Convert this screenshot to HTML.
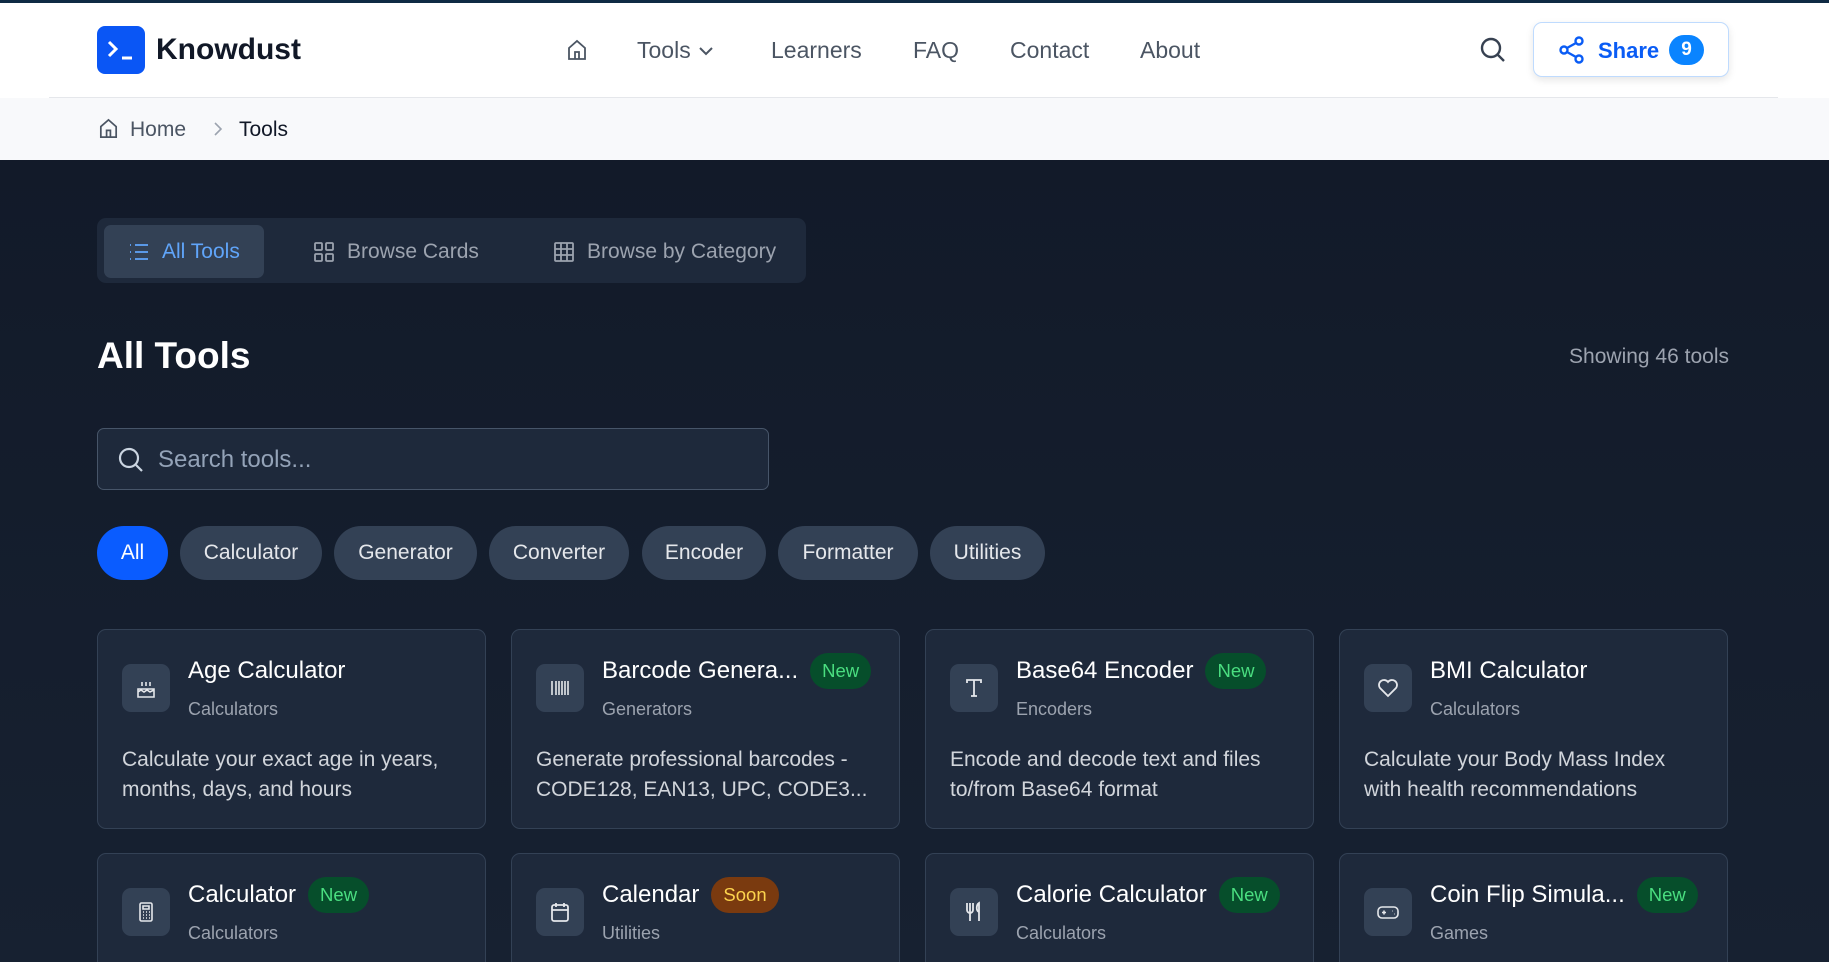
<!DOCTYPE html>
<html><head><meta charset="utf-8"><style>
*{box-sizing:border-box;margin:0;padding:0}
html,body{width:1829px;height:962px;overflow:hidden}
body{font-family:"Liberation Sans",sans-serif;background:#141d2c;position:relative}
.hdr{position:absolute;left:0;top:0;width:1829px;height:98px;background:#fff;border-top:3px solid #0f2a44}
.hline{position:absolute;left:49px;top:97px;width:1729px;height:1px;background:#e5e7eb}
.logo{position:absolute;left:97px;top:26px;width:48px;height:48px;background:#0a56f5;border-radius:8px}
.brand{position:absolute;left:156px;top:33px;font-size:30px;font-weight:bold;color:#111827}
.nav{position:absolute;top:37px;font-size:23px;color:#4b5563}
.bc{position:absolute;left:0;top:98px;width:1829px;height:62px;background:#f8f9fb}
.main{position:absolute;left:0;top:160px;width:1829px;height:802px;background:linear-gradient(180deg,#121a29,#172131)}
.tabs{position:absolute;left:97px;top:218px;width:709px;height:65px;background:#1e293b;border-radius:9px}
.tab{position:absolute;top:7px;height:53px;border-radius:7px;font-size:21px;color:#9ca3af;display:flex;align-items:center;gap:12px;padding-left:24px;white-space:nowrap}
.h1{position:absolute;left:97px;top:335px;font-size:37px;font-weight:bold;color:#fff}
.show{position:absolute;right:100px;top:345px;font-size:21px;color:#9ca3af}
.search{position:absolute;left:97px;top:428px;width:672px;height:62px;border:1px solid #475569;border-radius:7px;background:#1e293b}
.search span{position:absolute;left:60px;top:17px;font-size:24px;color:#94a3b8}
.chip{position:absolute;top:526px;height:54px;border-radius:27px;background:#334155;color:#e5e7eb;font-size:21px;display:flex;align-items:center;justify-content:center}
.card{position:absolute;width:389px;height:200px;background:#1e293b;border:1px solid #334155;border-radius:9px;overflow:hidden}
.ib{position:absolute;left:24px;top:34px;width:48px;height:48px;background:#334155;border-radius:9px;display:flex;align-items:center;justify-content:center}
.tt{position:absolute;left:90px;top:26px;height:30px;font-size:24px;color:#fff;display:flex;align-items:center;gap:12px;white-space:nowrap}
.cat{position:absolute;left:90px;top:69px;font-size:18px;color:#9ca3af}
.ds{position:absolute;left:24px;top:115px;width:335px;font-size:21px;line-height:30px;color:#d1d5db}
.bn{font-size:18.5px;line-height:20px;padding:8px 12px;border-radius:18px;background:#064e2b;color:#4ade80}
.bs{background:#7a3a0f;color:#fcd34d}
</style></head><body>
<div class="hdr"></div><div class="hline"></div>
<div class="logo"><svg width="48" height="48" viewBox="0 0 48 48" fill="none" stroke="#fff" stroke-width="3"><path d="M12 16l7 7-7 7M25 32h10"/></svg></div>
<div class="brand">Knowdust</div>
<svg style="position:absolute;left:565px;top:38px" width="24" height="24" viewBox="0 0 24 24" fill="none" stroke="#4b5563" stroke-width="1.8"><path d="M4 10l8-7 8 7v11H4zM10 21v-7h4v7"/></svg>
<div class="nav" style="left:637px">Tools <svg width="18" height="14" viewBox="0 0 18 14" fill="none" stroke="#4b5563" stroke-width="2"><path d="M3 4l6 6 6-6"/></svg></div>
<div class="nav" style="left:771px">Learners</div>
<div class="nav" style="left:913px">FAQ</div>
<div class="nav" style="left:1010px">Contact</div>
<div class="nav" style="left:1140px">About</div>
<svg style="position:absolute;left:1479px;top:36px" width="28" height="28" viewBox="0 0 28 28" fill="none" stroke="#374151" stroke-width="2.4"><circle cx="12" cy="12" r="9"/><path d="M19 19l6 6"/></svg>
<div style="position:absolute;left:1533px;top:22px;width:196px;height:55px;border:1px solid #bfdbfe;border-radius:9px;background:#fff;box-shadow:0 3px 8px rgba(0,0,0,.1)"></div>
<svg style="position:absolute;left:1558px;top:35px" width="28" height="30" viewBox="0 0 28 30" fill="none" stroke="#0a5cf5" stroke-width="2.4"><circle cx="21" cy="6" r="3.5"/><circle cx="6" cy="15" r="3.5"/><circle cx="21" cy="24" r="3.5"/><path d="M9 13l9-5M9 17l9 5"/></svg>
<div style="position:absolute;left:1598px;top:38px;font-size:22px;font-weight:bold;color:#0a5cf5">Share</div>
<div style="position:absolute;left:1669px;top:35px;width:35px;height:30px;border-radius:15px;background:#0a84ff;color:#fff;font-weight:bold;font-size:19px;text-align:center;line-height:30px">9</div>
<div class="bc"></div>
<svg style="position:absolute;left:97px;top:117px" width="23" height="23" viewBox="0 0 24 24" fill="none" stroke="#4b5563" stroke-width="1.8"><path d="M4 10l8-7 8 7v11H4zM10 21v-7h4v7"/></svg>
<div style="position:absolute;left:130px;top:118px;font-size:21px;color:#4b5563">Home</div>
<svg style="position:absolute;left:210px;top:119px" width="16" height="20" viewBox="0 0 16 20" fill="none" stroke="#9ca3af" stroke-width="1.6"><path d="M5 4l6 6-6 6"/></svg>
<div style="position:absolute;left:239px;top:118px;font-size:21px;color:#111827">Tools</div>
<div class="main"></div>
<div class="tabs">
<div class="tab" style="left:7px;width:160px;background:#334155;color:#60a5fa"><svg width="22" height="20" viewBox="0 0 22 20" fill="none" stroke="#60a5fa" stroke-width="1.8"><path d="M7 3h13M7 10h13M7 17h13M2 3h1M2 10h1M2 17h1"/></svg>All Tools</div>
<div class="tab" style="left:192px"><svg width="22" height="22" viewBox="0 0 22 22" fill="none" stroke="#9ca3af" stroke-width="1.8"><rect x="2" y="2" width="7" height="7" rx="1"/><rect x="13" y="2" width="7" height="7" rx="1"/><rect x="2" y="13" width="7" height="7" rx="1"/><rect x="13" y="13" width="7" height="7" rx="1"/></svg>Browse Cards</div>
<div class="tab" style="left:432px"><svg width="22" height="22" viewBox="0 0 22 22" fill="none" stroke="#9ca3af" stroke-width="1.8"><rect x="2" y="2" width="18" height="18" rx="1"/><path d="M8 2v18M14 2v18M2 8h18M2 14h18"/></svg>Browse by Category</div>
</div>
<div class="h1">All Tools</div>
<div class="show">Showing 46 tools</div>
<div class="search"><svg style="position:absolute;left:19px;top:17px" width="28" height="28" viewBox="0 0 28 28" fill="none" stroke="#cbd5e1" stroke-width="2.2"><circle cx="12" cy="12" r="9"/><path d="M19 19l6 6"/></svg><span>Search tools...</span></div>
<div class="chip" style="left:97px;width:71px;background:#0a5cff;color:#fff">All</div>
<div class="chip" style="left:180px;width:142px">Calculator</div>
<div class="chip" style="left:334px;width:143px">Generator</div>
<div class="chip" style="left:489px;width:140px">Converter</div>
<div class="chip" style="left:642px;width:124px">Encoder</div>
<div class="chip" style="left:778px;width:140px">Formatter</div>
<div class="chip" style="left:930px;width:115px">Utilities</div>

<div class="card" style="left:97px;top:629px"><div class="ib"><svg width="22" height="22" viewBox="0 0 22 22" fill="none" stroke="#e5e7eb" stroke-width="1.6"><path d="M3 20h16v-8H3zM3 15l3-2 3 2 3-2 3 2 4-2M7 5v4M11 5v4M15 5v4"/></svg></div><div class="tt">Age Calculator</div><div class="cat">Calculators</div><div class="ds">Calculate your exact age in years, months, days, and hours</div></div>
<div class="card" style="left:511px;top:629px"><div class="ib"><svg width="22" height="22" viewBox="0 0 22 22" fill="none" stroke="#e5e7eb" stroke-width="1.6"><path d="M3 4v14M7 4v14M10 4v14M13 4v14M16 4v14M19 4v14"/></svg></div><div class="tt">Barcode Genera... <span class="bn">New</span></div><div class="cat">Generators</div><div class="ds" style="white-space:nowrap">Generate professional barcodes -<br>CODE128, EAN13, UPC, CODE3...</div></div>
<div class="card" style="left:925px;top:629px"><div class="ib"><svg width="22" height="22" viewBox="0 0 22 22" fill="none" stroke="#e5e7eb" stroke-width="1.8"><path d="M4 6V3h14v3M11 3v16M8 19h6"/></svg></div><div class="tt">Base64 Encoder <span class="bn">New</span></div><div class="cat">Encoders</div><div class="ds">Encode and decode text and files to/from Base64 format</div></div>
<div class="card" style="left:1339px;top:629px"><div class="ib"><svg width="24" height="22" viewBox="0 0 24 22" fill="none" stroke="#e5e7eb" stroke-width="1.8"><path d="M12 19L4 11a4.5 4.5 0 018-6 4.5 4.5 0 018 6z"/></svg></div><div class="tt">BMI Calculator</div><div class="cat">Calculators</div><div class="ds">Calculate your Body Mass Index<br>with health recommendations</div></div>

<div class="card" style="left:97px;top:853px;height:120px"><div class="ib"><svg width="22" height="22" viewBox="0 0 22 22" fill="none" stroke="#e5e7eb" stroke-width="1.6"><rect x="5" y="2" width="12" height="18" rx="1.5"/><path d="M8 5h6v3H8zM8 11h1M11 11h1M14 11h1M8 14h1M11 14h1M14 14h1M8 17h1M11 17h1M14 17h1"/></svg></div><div class="tt">Calculator <span class="bn">New</span></div><div class="cat">Calculators</div></div>
<div class="card" style="left:511px;top:853px;height:120px"><div class="ib"><svg width="22" height="22" viewBox="0 0 22 22" fill="none" stroke="#e5e7eb" stroke-width="1.8"><rect x="3" y="4" width="16" height="16" rx="2"/><path d="M3 9h16M7 2v4M15 2v4"/></svg></div><div class="tt">Calendar <span class="bn bs">Soon</span></div><div class="cat">Utilities</div></div>
<div class="card" style="left:925px;top:853px;height:120px"><div class="ib"><svg width="22" height="22" viewBox="0 0 22 22" fill="none" stroke="#e5e7eb" stroke-width="1.8"><path d="M4 2v7a3 3 0 006 0V2M7 2v18M16 20V2c-3 2-3 8 0 9"/></svg></div><div class="tt">Calorie Calculator <span class="bn">New</span></div><div class="cat">Calculators</div></div>
<div class="card" style="left:1339px;top:853px;height:120px"><div class="ib"><svg width="24" height="22" viewBox="0 0 24 22" fill="none" stroke="#e5e7eb" stroke-width="1.6"><rect x="2" y="6" width="20" height="11" rx="4"/><path d="M6 11.5h4M8 9.5v4M16 10h.5M18 13h.5"/></svg></div><div class="tt">Coin Flip Simula... <span class="bn">New</span></div><div class="cat">Games</div></div>
</body></html>
